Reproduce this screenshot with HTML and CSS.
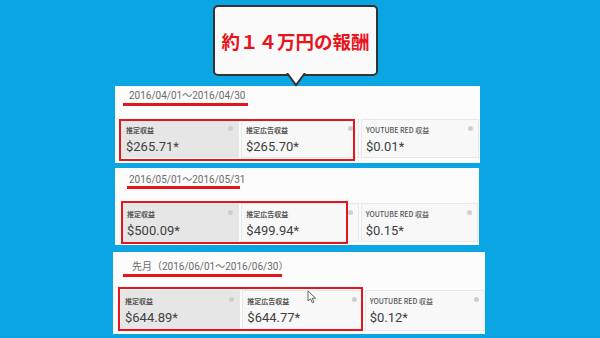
FILE: index.html
```html
<!DOCTYPE html>
<html lang="ja">
<head>
<meta charset="utf-8">
<link rel="stylesheet" href="styles.css">
</head>
<body>
<div class="stage">
  <div class="bubble">
    <span class="bubble-text">約１４万円の報酬</span>
    <svg class="tail" width="20" height="14" viewBox="0 0 20 14"><path d="M1 0 L10 12 L19 0" fill="#fafafa" stroke="#333" stroke-width="2"/></svg>
  </div>

  <div class="panel p1">
    <div class="head"><span class="date">2016/04/01〜2016/04/30</span></div>
    <div class="cells">
      <div class="cell sel"><div class="lbl">推定収益</div><div class="val">$265.71*</div><i class="q"></i></div>
      <div class="cell"><div class="lbl">推定広告収益</div><div class="val">$265.70*</div><i class="q"></i></div>
      <div class="cell"><div class="lbl yt">YOUTUBE RED 収益</div><div class="val">$0.01*</div><i class="q"></i></div>
    </div>
    <div class="uline"></div>
    <div class="redbox"></div>
  </div>

  <div class="panel p2">
    <div class="head"><span class="date">2016/05/01〜2016/05/31</span></div>
    <div class="cells">
      <div class="cell sel"><div class="lbl">推定収益</div><div class="val">$500.09*</div><i class="q"></i></div>
      <div class="cell"><div class="lbl">推定広告収益</div><div class="val">$499.94*</div><i class="q"></i></div>
      <div class="cell"><div class="lbl yt">YOUTUBE RED 収益</div><div class="val">$0.15*</div><i class="q"></i></div>
    </div>
    <div class="uline"></div>
    <div class="redbox"></div>
  </div>

  <div class="panel p3">
    <div class="head"><span class="date">先月（2016/06/01〜2016/06/30）</span></div>
    <div class="cells">
      <div class="cell sel"><div class="lbl">推定収益</div><div class="val">$644.89*</div><i class="q"></i></div>
      <div class="cell"><div class="lbl">推定広告収益</div><div class="val">$644.77*</div><i class="q"></i></div>
      <div class="cell"><div class="lbl yt">YOUTUBE RED 収益</div><div class="val">$0.12*</div><i class="q"></i></div>
    </div>
    <div class="uline"></div>
    <div class="redbox"></div>
    <svg class="cursor" width="10" height="14" viewBox="0 0 10 14"><path d="M1 1 L1 11 L3.5 8.8 L5.4 12.8 L7 12 L5.2 8.2 L8.6 8.2 Z" fill="#fff" stroke="#555" stroke-width="0.9" stroke-linejoin="round"/></svg>
  </div>
</div>
</body>
</html>
```

FILE: styles.css
```css
html, body {
  margin: 0;
  padding: 0;
}
body {
  width: 600px;
  height: 338px;
  overflow: hidden;
  background: #0aa5e3;
  font-family: Roboto, "Noto Sans CJK JP", sans-serif;
}
.stage {
  display: flex;
  flex-direction: column;
  align-items: flex-start;
}
.bubble {
  position: relative;
  box-sizing: border-box;
  margin: 5px 0 0 213px;
  width: 165px;
  height: 71px;
  background: #fafafa;
  border: 2px solid #333;
  border-radius: 5px;
  display: flex;
  align-items: center;
  justify-content: center;
  z-index: 2;
}
.bubble-text {
  font-family: "Noto Sans CJK JP", sans-serif;
  font-weight: 700;
  font-size: 18.5px;
  color: #e8141c;
}
.tail {
  position: absolute;
  left: 71px;
  bottom: -13px;
}
.panel {
  position: relative;
  background: #fcfcfc;
  box-sizing: border-box;
  display: flex;
  flex-direction: column;
}
.head {
  color: #6b6b6b;
  font-size: 10px;
  line-height: 12px;
}
.cells {
  display: flex;
  gap: 2px;
}
.cell {
  position: relative;
  flex: 1;
  box-sizing: border-box;
  background: #f8f8f8;
  border: 1px solid #e8e8e8;
  padding: 6px 0 0 4px;
}
.cell.sel {
  background: #e6e6e6;
}
.lbl {
  font-family: "Noto Sans CJK JP", sans-serif;
  font-weight: 700;
  font-size: 7px;
  line-height: 9px;
  color: #555;
  margin-bottom: 4px;
  white-space: nowrap;
}
.lbl.yt {
  font-weight: 500;
}
.val {
  font-size: 13px;
  line-height: 16px;
  color: #404040;
}
.q {
  position: absolute;
  right: 5px;
  top: 6px;
  width: 5px;
  height: 5px;
  border-radius: 50%;
  background: #cfcfcf;
}
.uline {
  position: absolute;
  height: 3px;
  background: #e3161e;
}
.redbox {
  position: absolute;
  box-sizing: border-box;
  border: 2px solid #e3161e;
}

/* panel 1 */
.p1 {
  margin: 10px 0 0 115px;
  width: 365px;
  height: 77px;
}
.p1 .head { height: 33px; box-sizing: border-box; padding: 4px 0 0 14px; }
.p1 .cells { margin-left: 6px; width: 358px; height: 39px; }
.p1 .uline { left: 8px; top: 17px; width: 125px; }
.p1 .redbox { left: 4px; top: 33px; width: 236px; height: 42px; }

/* panel 2 */
.p2 {
  margin: 5px 0 0 115px;
  width: 364px;
  height: 77px;
}
.p2 .head { height: 35px; box-sizing: border-box; padding: 6px 0 0 14px; }
.p2 .cells { margin-left: 7px; width: 356px; height: 39px; }
.p2 .uline { left: 12px; top: 18px; width: 113px; }
.p2 .redbox { left: 6px; top: 33px; width: 227px; height: 43px; }

/* panel 3 */
.p3 {
  margin: 7px 0 0 113px;
  width: 372px;
  height: 82px;
}
.p3 .head { height: 38px; box-sizing: border-box; padding: 9px 0 0 19px; }
.p3 .cells { margin-left: 7px; width: 365px; height: 41px; }
.p3 .uline { left: 10px; top: 22px; width: 159px; }
.p3 .redbox { left: 5px; top: 35px; width: 245px; height: 44px; }
.cursor {
  position: absolute;
  left: 194px;
  top: 38px;
}
```
